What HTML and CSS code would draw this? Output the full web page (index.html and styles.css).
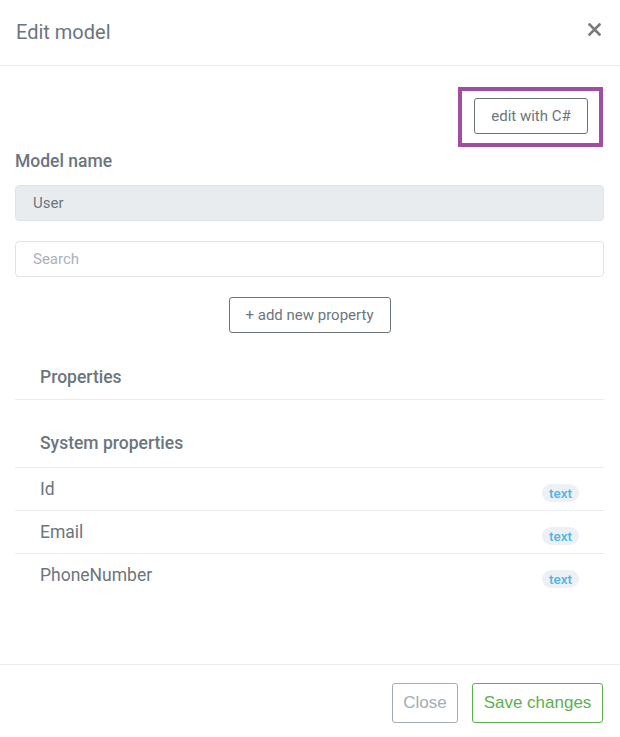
FILE: index.html
```html
<!DOCTYPE html>
<html>
<head>
<meta charset="utf-8">
<link rel="stylesheet" href="styles.css">
</head>
<body>
<div class="modal">
  <div class="modal-header">
    <div class="modal-title">Edit model</div>
    <button class="close-x" aria-label="Close">
      <svg width="13" height="13" viewBox="0 0 13 13"><path d="M1.5 1.5 L11.5 11.5 M11.5 1.5 L1.5 11.5" stroke="#7a7a7a" stroke-width="2.6" stroke-linecap="square" fill="none"/></svg>
    </button>
  </div>
  <div class="modal-body">
    <div class="csharp-row">
      <div class="highlight">
        <button class="btn-outline">edit with C#</button>
      </div>
    </div>
    <div class="label">Model name</div>
    <div class="input disabled">User</div>
    <div class="input search">Search</div>
    <div class="add-row">
      <button class="btn-outline add">+ add new property</button>
    </div>
    <div class="section-head first">Properties</div>
    <div class="section-head second">System properties</div>
    <div class="prop-row"><span class="prop-name">Id</span><span class="badge">text</span></div>
    <div class="prop-row"><span class="prop-name">Email</span><span class="badge">text</span></div>
    <div class="prop-row last"><span class="prop-name">PhoneNumber</span><span class="badge">text</span></div>
  </div>
  <div class="modal-footer">
    <button class="btn-close">Close</button>
    <button class="btn-save">Save changes</button>
  </div>
</div>
</body>
</html>
```
FILE: styles.css
```css
* { box-sizing: border-box; }
html, body { margin: 0; padding: 0; background: #fff; }
body { font-family: Roboto, "Liberation Sans", sans-serif; color: #6c757d; }
button { font-family: inherit; background: #fff; cursor: pointer; }

.modal { width: 620px; height: 737px; display: flex; flex-direction: column; }

.modal-header {
  height: 66px;
  border-bottom: 1px solid #e9ecef;
  display: flex; align-items: center; justify-content: space-between;
  padding: 0 19px 2px 16px;
}
.modal-title { font-size: 20px; font-weight: 400; color: #6c757d; }
.close-x { border: none; padding: 0; width: 13px; height: 13px; display: flex; margin-top: -4px; }

.modal-body { flex: 1; padding: 21px 16px 0 15px; }

.csharp-row { display: flex; justify-content: flex-end; padding-right: 1px; }
.highlight { border: 4px solid #a14ea0; padding: 7px 11px 9px 12px; }
.btn-outline {
  border: 1px solid #6c757d; border-radius: 3px;
  height: 36px; font-size: 15px; color: #6c757d; padding: 0 16px;
}
.highlight .btn-outline { width: 114px; padding: 0; }

.label { font-size: 17.5px; font-weight: 500; color: #6c757d; margin-top: 3px; line-height: 23px; }

.input {
  height: 36px; border: 1px solid #dfe3e7; border-radius: 4px;
  padding: 0 17px; display: flex; align-items: center; font-size: 15px;
}
.input.disabled { background: #e9ecef; color: #6c757d; margin-top: 12px; }
.input.search { margin-top: 20px; color: #aab1b8; }

.add-row { display: flex; justify-content: center; margin-top: 20px; }
.btn-outline.add { width: 162px; padding: 0; }

.section-head {
  font-size: 17.5px; font-weight: 500; color: #6c757d; padding-left: 25px;
  display: flex; align-items: center; border-bottom: 1px solid #e9ecef;
}
.section-head.first { margin-top: 24px; height: 43px; padding-bottom: 3px; }
.section-head.second { margin-top: 20px; height: 48px; padding-bottom: 2px; }

.prop-row {
  height: 43px; display: flex; justify-content: space-between; align-items: center;
  padding: 0 25px; border-bottom: 1px solid #e9ecef;
}
.prop-row.last { border-bottom: none; }
.prop-name { font-size: 17.5px; color: #6c757d; margin-top: -1px; }
.badge {
  background: #edf1f5; color: #4fb6e6; font-size: 13.5px; font-weight: 500;
  height: 18px; line-height: 18px; padding: 0 7px; border-radius: 9px; margin-top: 7px;
}

.modal-footer {
  height: 73px; border-top: 1px solid #e9ecef;
  display: flex; justify-content: flex-end; align-items: flex-start;
  padding: 18px 17px 0 0; gap: 14px;
}
.btn-close, .btn-save {
  font-family: "Liberation Sans", Arial, sans-serif; font-size: 17px;
  height: 40px; border-radius: 3px; padding: 0 11px;
}
.btn-close { border: 1px solid #a2acb5; color: #a2acb5; width: 66px; padding: 0; }
.btn-save { border: 1px solid #5cb04f; color: #5cb04f; width: 131px; padding: 0; }
```
